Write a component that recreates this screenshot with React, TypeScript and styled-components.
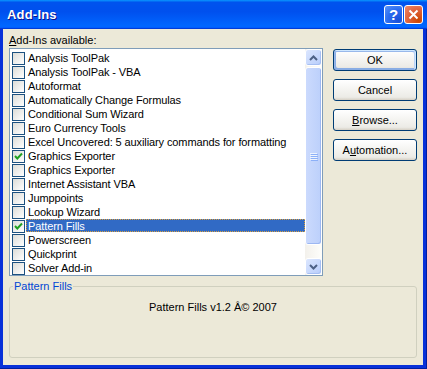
import styled, { createGlobalStyle } from 'styled-components';

const GlobalStyle = createGlobalStyle`
  html, body { margin: 0; padding: 0; }
  body {
    font-family: "Liberation Sans", Arial, sans-serif;
    font-size: 11px;
    color: #000;
  }
`;

const Window = styled.div`
  width: 427px;
  height: 369px;
  display: flex;
  flex-direction: column;
  background: #0831d9;
  box-shadow: inset -1px -1px #001ea0;
`;

const TitleBar = styled.div`
  height: 29px;
  flex: none;
  display: flex;
  align-items: center;
  padding: 0 4px 0 7px;
  background: linear-gradient(180deg, #0997ff, #0053ee 8%, #0050ee 40%, #06f 88%, #06f 93%, #005bff 95%, #003dd7 96%, #003dd7);
`;

const Title = styled.div`
  flex: 1;
  color: #fff;
  font-weight: bold;
  font-size: 13px;
  text-shadow: 1px 1px #0f1089;
  letter-spacing: 0.2px;
`;

const Controls = styled.div`
  display: flex;
  gap: 1px;
`;

const CaptionButton = styled.div<{ $close?: boolean }>`
  width: 19px;
  height: 19px;
  box-sizing: border-box;
  border: 1px solid #fff;
  border-radius: 3px;
  display: flex;
  align-items: center;
  justify-content: center;
  color: #fff;
  font-weight: bold;
  font-size: 15px;
  background: ${(p) =>
    p.$close
      ? 'radial-gradient(circle at 80% 85%, #cc4600, #e0633d 55%, #f08a6a)'
      : 'radial-gradient(circle at 80% 85%, #1a4fd8, #2b6cf0 55%, #5a94fa)'};
`;

const Frame = styled.div`
  flex: 1;
  display: flex;
  padding: 0 4px 4px 3px;
`;

const Body = styled.div`
  flex: 1;
  background: #ece9d8;
  padding: 5px 6px 7px 6px;
  display: flex;
  flex-direction: column;
`;

const Main = styled.div`
  display: flex;
  gap: 10px;
`;

const LeftCol = styled.div`
  width: 314px;
  display: flex;
  flex-direction: column;
`;

const Caption = styled.div`
  height: 13px;
  line-height: 13px;
  margin-bottom: 1px;
`;

const U = styled.span`
  text-decoration: underline;
`;

const ListBox = styled.div`
  height: 228px;
  box-sizing: border-box;
  border: 1px solid #7f9db9;
  background: #fff;
  display: flex;
`;

const Rows = styled.div`
  flex: 1;
  padding: 2px 0 0 2px;
  display: flex;
  flex-direction: column;
`;

const Row = styled.div`
  height: 14px;
  display: flex;
  align-items: flex-start;
`;

const Box = styled.div`
  width: 13px;
  height: 13px;
  box-sizing: border-box;
  margin-top: 1px;
  margin-right: 1px;
  border: 1px solid #1c5180;
  background: linear-gradient(135deg, #dcdcd7, #fff);
  flex: none;
  display: flex;
`;

const ItemText = styled.div<{ $selected?: boolean }>`
  flex: 1;
  height: 13px;
  line-height: 14px;
  padding-left: 2px;
  letter-spacing: -0.1px;
  white-space: nowrap;
  overflow: hidden;
  background: ${(p) => (p.$selected ? '#316ac5' : 'transparent')};
  color: ${(p) => (p.$selected ? '#fff' : '#000')};
  outline: ${(p) => (p.$selected ? '1px dotted #d9a040' : 'none')};
  outline-offset: -1px;
`;

const ScrollBar = styled.div`
  width: 17px;
  display: flex;
  flex-direction: column;
  background: linear-gradient(90deg, #f3f1ec, #fefefb);
`;

const Arrow = styled.div`
  width: 17px;
  height: 17px;
  box-sizing: border-box;
  border: 1px solid #fff;
  border-radius: 3px;
  background: linear-gradient(135deg, #dbe6fe, #b8cdfb);
  box-shadow: inset -1px -1px #a6bff3;
  display: flex;
  align-items: center;
  justify-content: center;
`;

const Track = styled.div`
  flex: 1;
  padding-top: 1px;
`;

const Thumb = styled.div`
  height: 178px;
  box-sizing: border-box;
  border: 1px solid #fff;
  border-radius: 3px;
  background: linear-gradient(90deg, #cbdafd, #bcd0fb);
  box-shadow: inset -1px -1px #9db8f2;
  display: flex;
  flex-direction: column;
  align-items: center;
  justify-content: center;
  gap: 1px;
`;

const Grip = styled.div`
  width: 7px;
  height: 1px;
  background: #eef4fe;
  box-shadow: 1px 1px #8cb0f8;
`;

const Buttons = styled.div`
  width: 84px;
  margin-top: 15px;
  display: flex;
  flex-direction: column;
  gap: 8px;
`;

const Button = styled.div<{ $default?: boolean }>`
  height: 22px;
  box-sizing: border-box;
  border: 1px solid #003c74;
  border-radius: 3px;
  background: linear-gradient(180deg, #fff, #ecebe6 86%, #d6d0c5);
  display: flex;
  align-items: center;
  justify-content: center;
  box-shadow: ${(p) =>
    p.$default
      ? 'inset -1px 1px #cee7ff, inset 1px 2px #98b8ea, inset -2px 2px #bcd4f6, inset 1px -1px #89ade4, inset 2px -2px #89ade4'
      : 'none'};
`;

const Group = styled.fieldset`
  flex: 1;
  margin: 4px 0 0 0;
  padding: 8px 0 0 0;
  border: 1px solid #d0d0bf;
  border-radius: 3px;
  text-align: center;
  line-height: 13px;
`;

const Legend = styled.legend`
  margin-left: 3px;
  padding: 0 1px;
  color: #0046d5;
  text-align: left;
  line-height: 13px;
`;

const items: { name: string; checked?: boolean; selected?: boolean }[] = [
  { name: 'Analysis ToolPak' },
  { name: 'Analysis ToolPak - VBA' },
  { name: 'Autoformat' },
  { name: 'Automatically Change Formulas' },
  { name: 'Conditional Sum Wizard' },
  { name: 'Euro Currency Tools' },
  { name: 'Excel Uncovered: 5 auxiliary commands for formatting' },
  { name: 'Graphics Exporter', checked: true },
  { name: 'Graphics Exporter' },
  { name: 'Internet Assistant VBA' },
  { name: 'Jumppoints' },
  { name: 'Lookup Wizard' },
  { name: 'Pattern Fills', checked: true, selected: true },
  { name: 'Powerscreen' },
  { name: 'Quickprint' },
  { name: 'Solver Add-in' },
];

const Check = () => (
  <svg width="11" height="11" viewBox="0 0 11 11">
    <path d="M2 5 L4.3 7.5 L9 2.5" fill="none" stroke="#21a121" strokeWidth="2" />
  </svg>
);

const Chevron = ({ up }: { up?: boolean }) => (
  <svg width="9" height="6" viewBox="0 0 9 6">
    <path
      d={up ? 'M1 5 L4.5 1.5 L8 5' : 'M1 1 L4.5 4.5 L8 1'}
      fill="none"
      stroke="#4d6185"
      strokeWidth="2"
    />
  </svg>
);

export default function App() {
  return (
    <>
      <GlobalStyle />
      <Window>
        <TitleBar>
          <Title>Add-Ins</Title>
          <Controls>
            <CaptionButton>?</CaptionButton>
            <CaptionButton $close>
              <svg width="11" height="11" viewBox="0 0 11 11">
                <path d="M1.5 1.5 L9.5 9.5 M9.5 1.5 L1.5 9.5" stroke="#fff" strokeWidth="2" />
              </svg>
            </CaptionButton>
          </Controls>
        </TitleBar>
        <Frame>
          <Body>
            <Main>
              <LeftCol>
                <Caption>
                  <U>A</U>dd-Ins available:
                </Caption>
                <ListBox>
                  <Rows>
                    {items.map((it, i) => (
                      <Row key={i}>
                        <Box>{it.checked && <Check />}</Box>
                        <ItemText $selected={it.selected}>{it.name}</ItemText>
                      </Row>
                    ))}
                  </Rows>
                  <ScrollBar>
                    <Arrow>
                      <Chevron up />
                    </Arrow>
                    <Track>
                      <Thumb>
                        <Grip />
                        <Grip />
                        <Grip />
                        <Grip />
                      </Thumb>
                    </Track>
                    <Arrow>
                      <Chevron />
                    </Arrow>
                  </ScrollBar>
                </ListBox>
              </LeftCol>
              <Buttons>
                <Button $default>OK</Button>
                <Button>Cancel</Button>
                <Button>
                  <U>B</U>rowse...
                </Button>
                <Button>
                  A<U>u</U>tomation...
                </Button>
              </Buttons>
            </Main>
            <Group>
              <Legend>Pattern Fills</Legend>
              Pattern Fills v1.2 Â© 2007
            </Group>
          </Body>
        </Frame>
      </Window>
    </>
  );
}
